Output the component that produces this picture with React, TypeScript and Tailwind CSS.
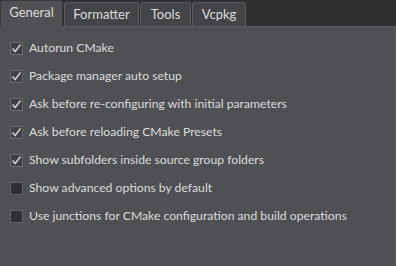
import React from "react";

const tabs = [
  { label: "General", w: "w-[63px]" },
  { label: "Formatter", w: "w-[75px]" },
  { label: "Tools", w: "w-[51px]" },
  { label: "Vcpkg", w: "w-[54px]" },
];

const options: { label: string; checked: boolean }[] = [
  { label: "Autorun CMake", checked: true },
  { label: "Package manager auto setup", checked: true },
  { label: "Ask before re-configuring with initial parameters", checked: true },
  { label: "Ask before reloading CMake Presets", checked: true },
  { label: "Show subfolders inside source group folders", checked: true },
  { label: "Show advanced options by default", checked: false },
  { label: "Use junctions for CMake configuration and build operations", checked: false },
];

function CheckBox({ checked }: { checked: boolean }) {
  return (
    <span
      className={
        "flex h-[13px] w-[13px] shrink-0 items-center justify-center border " +
        (checked ? "border-[#6c6d70] bg-[#404144]" : "border-[#626366] bg-[#2f3033]")
      }
    >
      {checked && (
        <svg width="11" height="11" viewBox="0 0 11 11" fill="none">
          <path d="M1.5 5.5 L4.2 8.5 L9.5 1.5" stroke="#cfcfcf" strokeWidth="1.5" />
        </svg>
      )}
    </span>
  );
}

export default function App() {
  return (
    <div
      className="flex h-[266px] w-[396px] flex-col bg-[#2f3032] text-[12px] text-[#dcdcdc]"
      style={{ fontFamily: 'Lato, "Noto Sans", sans-serif' }}
    >
      {/* Tabs */}
      <div className="flex h-[26px] items-end">
        {tabs.map((t, i) =>
          i === 0 ? (
            <div
              key={t.label}
              className={
                "relative z-10 -mb-px flex h-[27px] items-center justify-center rounded-t-[3px] border border-b-0 border-[#3a3b3d] bg-[#4f5053] pb-[2px] text-[13px] " +
                t.w
              }
            >
              {t.label}
            </div>
          ) : (
            <div
              key={t.label}
              className={
                "ml-[1px] flex h-[24px] items-center justify-center rounded-t-[3px] border border-b-0 border-[#5a5b5e] bg-[#434447] text-[13px] " +
                t.w
              }
            >
              {t.label}
            </div>
          ),
        )}
      </div>

      {/* Panel */}
      <div className="flex flex-1 flex-col gap-[11px] border-t border-r border-[#5c5d60] bg-[#4f5053] px-[10px] pt-[13px]">
        {options.map((o) => (
          <label key={o.label} className="flex h-[17px] items-center gap-[6px]">
            <CheckBox checked={o.checked} />
            <span className="whitespace-nowrap text-[12.2px]">{o.label}</span>
          </label>
        ))}
      </div>
    </div>
  );
}
